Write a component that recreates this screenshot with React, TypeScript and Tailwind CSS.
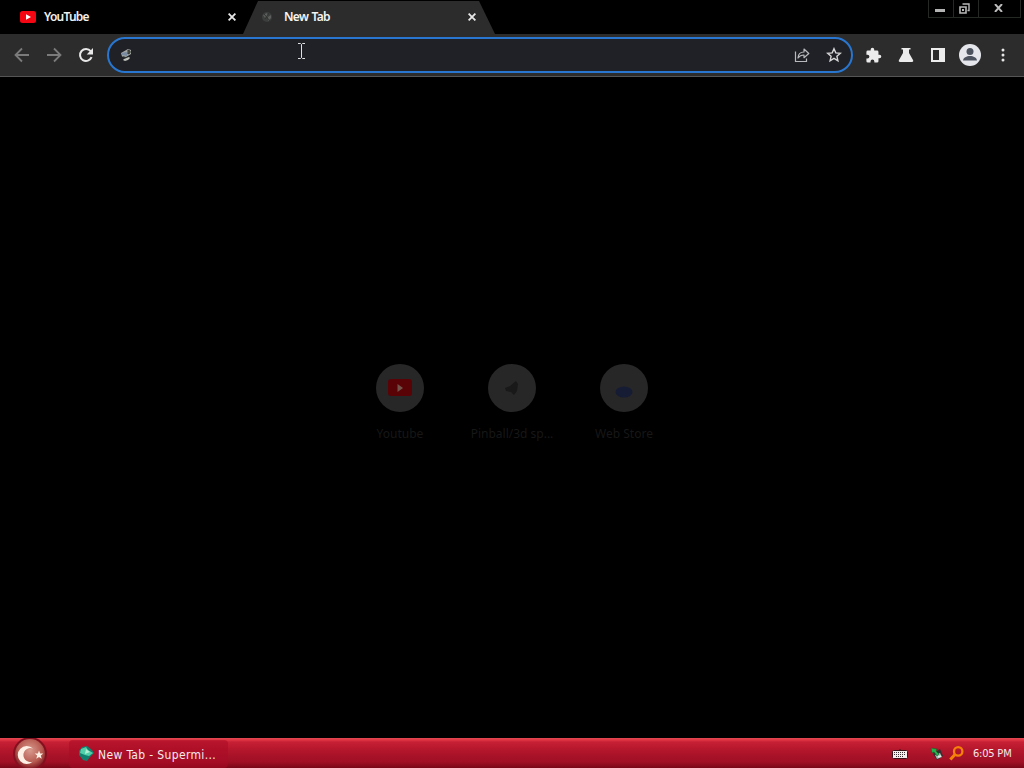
import React from "react";

function YouTubeLogo({ className }: { className: string }) {
  return (
    <svg className={className} viewBox="0 0 16 12">
      <rect width="16" height="12" rx="2.5" fill="#f40612" />
      <path d="M6 3.2 11 6 6 8.8z" fill="#fff" />
    </svg>
  );
}

function CloseIcon() {
  return (
    <svg className="h-2 w-2" viewBox="0 0 8 8" stroke="#e8e8e8" strokeWidth="1.8">
      <path d="M.6.6 7.4 7.4M7.4.6.6 7.4" />
    </svg>
  );
}

function TabStrip() {
  return (
    <header className="flex h-[34px] items-start bg-black">
      <div className="flex h-[34px] w-[243px] items-center pl-5 pr-[7px]">
        <YouTubeLogo className="h-3 w-4" />
        <span className="ml-2 text-[12px] font-semibold tracking-[-0.75px] text-[#f0f0f0]">YouTube</span>
        <span className="ml-auto"><CloseIcon /></span>
      </div>
      <div className="flex h-[34px] w-[252px] items-center bg-[#2c2c2c] pl-[18px] pr-[19px] [clip-path:polygon(15px_1px,236px_1px,100%_100%,0_100%)]">
        <svg className="h-3 w-3" viewBox="0 0 12 12">
          <circle cx="6" cy="6" r="5" fill="#3c3e3d" />
          <path d="m2 4 4-2 1 3-3 2zM7 6l3-2v3L7 10z" fill="#5c5f5d" />
          <path d="m4 8 4-6M3 3l6 7" stroke="#303330" strokeWidth="1" />
        </svg>
        <span className="ml-[11px] text-[12px] font-semibold tracking-[-0.7px] text-[#f4f4f4] [word-spacing:1px]">New Tab</span>
        <span className="ml-auto"><CloseIcon /></span>
      </div>
      <div className="ml-auto mr-[3px] flex h-[18px] w-[93px] border border-t-0 border-[#242924]">
        <div className="flex w-[25px] items-start justify-center border-r border-[#242924] pt-[9px]">
          <div className="ml-[-2px] h-[3px] w-[10px] bg-[#b4b4b4]" />
        </div>
        <div className="flex w-[25px] justify-center border-r border-[#242924] pt-[3px]">
          <svg className="mr-1 h-[11px] w-[11px]" viewBox="0 0 11 11" fill="none" stroke="#b8b8b8">
            <path d="M3.5 1H10v6.5H8.5" strokeWidth="1.4" />
            <path d="M1 4h6v6H1z" strokeWidth="1.6" />
            <path d="M3 6h2v2H3z" fill="#b8b8b8" stroke="none" />
          </svg>
        </div>
        <div className="flex flex-1 justify-center pr-[3px] pt-1">
          <svg className="h-2 w-[9px]" viewBox="0 0 9 8" stroke="#bdbdbd" strokeWidth="1.9"><path d="m1 0 7 8M8 0 1 8" /></svg>
        </div>
      </div>
    </header>
  );
}

function TextCursor() {
  return (
    <svg className="absolute left-[188px] top-[3px] h-[18px] w-[9px]" viewBox="0 0 9 18" fill="none" stroke="#e0e0e0">
      <path d="M1 1.5h2.5l1 1 1-1H8M4.5 2.5v13M1 16.5h2.5l1-1 1 1H8" />
    </svg>
  );
}

function Toolbar() {
  return (
    <div className="flex h-[43px] items-center border-b border-[#555] bg-[#2c2c2c] pl-[14px]">
      <svg className="h-4 w-4" viewBox="0 0 16 16" fill="none" stroke="#7b7b7b" strokeWidth="1.8"><path d="M15 8H2M8 1.5 1.5 8 8 14.5" /></svg>
      <svg className="ml-4 h-4 w-4" viewBox="0 0 16 16" fill="none" stroke="#7b7b7b" strokeWidth="1.8"><path d="M1 8h13M8 1.5 14.5 8 8 14.5" /></svg>
      <svg className="ml-4 h-4 w-4" viewBox="0 0 16 16" fill="none" stroke="#e8e8e8" strokeWidth="2"><path d="M13.6 10.2A6 6 0 1 1 12.7 4.2" /><path d="M15 1v6.5H8.7z" fill="#e8e8e8" stroke="none" /></svg>
      <div className="relative ml-[13px] flex h-9 w-[746px] items-center rounded-full border-2 border-[#2876cf] bg-[#202126] pl-[11px] pr-[9px]">
        <svg className="h-[14px] w-[13px]" viewBox="0 0 13 14">
          <path d="m1 5 7-4 3 1v4l-5 3-4-.5z" fill="#a3a8a5" />
          <path d="m2 5 4-1 2 1-1 3-5-1z" fill="#788ba1" />
          <path d="m8 2 2 1v2L8 6zM3 9l6 1" fill="#595c4e" stroke="#30352f" />
          <path d="m4 11 5-2 1 1-2 2-3 1-2-1z" fill="#c0c3bb" />
        </svg>
        <TextCursor />
        <svg className="ml-auto h-4 w-4" viewBox="0 0 16 16" fill="none" stroke="#b8b9bd" strokeWidth="1.2">
          <path d="M1.5 4.5v10h11v-3" />
          <path d="M4 11c.2-4.2 2.4-6 6-6V2l4.8 4.5L10 10.7V8C7 8 5.4 9 4 11z" strokeLinejoin="round" />
        </svg>
        <svg className="ml-4 h-4 w-4" viewBox="0 0 16 16" fill="none" stroke="#d7d7d7" strokeWidth="1.4"><path d="m8 1.7 1.8 4.2 4.6.4-3.5 3 1 4.5L8 11.4l-3.9 2.4 1-4.5-3.5-3 4.6-.4z" /></svg>
      </div>
      <svg className="ml-[12px] h-[17px] w-[17px]" viewBox="0 0 24 24" fill="#ececec"><path d="M20.5 11H19V7a2 2 0 0 0-2-2h-4V3.5a2.5 2.5 0 0 0-5 0V5H4a2 2 0 0 0-2 2v3.8h1.5a2.7 2.7 0 0 1 0 5.4H2V20a2 2 0 0 0 2 2h3.8v-1.5a2.7 2.7 0 0 1 5.4 0V22H17a2 2 0 0 0 2-2v-4h1.5a2.5 2.5 0 0 0 0-5z" /></svg>
      <svg className="ml-[16px] h-4 w-4" viewBox="0 0 16 16" fill="#ececec"><path d="M3.5 1h9v1.6H11V6l4 7c.6 1.2 0 2-1 2H2c-1 0-1.6-.8-1-2l4-7V2.6H3.5z" /></svg>
      <svg className="ml-[17px] h-[14px] w-[14px]" viewBox="0 0 14 14"><path d="M0 0h14v14H0zM2 2v10h6V2z" fill="#ececec" fillRule="evenodd" /></svg>
      <svg className="ml-[14px] h-[22px] w-[22px]" viewBox="0 0 22 22"><circle cx="11" cy="11" r="11" fill="#e4e6ec" /><circle cx="11" cy="7.5" r="3.5" fill="#4c535e" /><path d="M4 16.5c.5-6 13.5-6 14 0z" fill="#4c535e" /></svg>
      <svg className="ml-[20px] h-[14px] w-[4px]" viewBox="0 0 4 14" fill="#e8e8e8"><circle cx="2" cy="2" r="1.5" /><circle cx="2" cy="7" r="1.5" /><circle cx="2" cy="12" r="1.5" /></svg>
    </div>
  );
}

function Shortcut({ label, children }: { label: string; children: React.ReactNode }) {
  return (
    <div className="flex w-28 flex-col items-center">
      <div className="flex h-12 w-12 items-center justify-center rounded-full bg-[#272727]">{children}</div>
      <span className="mt-[14px] whitespace-nowrap text-[12px] leading-4 text-[#171717]">{label}</span>
    </div>
  );
}

function Taskbar() {
  return (
    <footer className="flex h-[30px] items-center bg-[linear-gradient(to_bottom,#e24a54_0px,#df3543_2px,#c72035_4px,#b6172c_11px,#a81229_18px,#a01025_24px,#780717_30px)] font-['DejaVu_Sans_Condensed','DejaVu_Sans',sans-serif] text-[#f5e9eb]">
      <svg className="ml-3 h-[30px] w-9" viewBox="0 0 36 30">
        <defs><radialGradient id="orb" cx="50%" cy="38%" r="62%"><stop offset="0" stopColor="#d89a8d" /><stop offset=".65" stopColor="#b75b51" /><stop offset="1" stopColor="#7d1720" /></radialGradient></defs>
        <circle cx="18" cy="16" r="17" fill="#84101f" /><circle cx="18" cy="16" r="15" fill="url(#orb)" />
        <path d="M21 10.5A9 9 0 1 0 21 23.5 7 7 0 1 1 21 10.5z" fill="#fff0e5" />
        <path d="m27 12.5 1.1 3 3.2.1-2.5 2 .9 3.1-2.7-1.800-2.700 1.800.9-3.100-2.500-2 3.200-.1z" fill="#fff0e5" />
      </svg>
      <div className="ml-[21px] mt-[2px] flex h-[28px] w-[159px] items-center rounded-sm bg-[#a90b26]/55 pl-[9px]">
        <svg className="h-4 w-4" viewBox="0 0 16 16">
          <path d="M1 5 4 1l5-1 5 4 2 3-4 4-3 4-4-1-4-5z" fill="#12806e" />
          <path d="m3 3 5-2 2 3 5 3-4 3-4-1-5-2z" fill="#50cfa9" />
          <path d="m8 3 4 3-5 2z" fill="#b0eed3" />
        </svg>
        <span className="ml-1 mt-[2px] whitespace-nowrap text-[12px] leading-4 tracking-[0.35px]">New Tab - Supermi...</span>
      </div>
      <svg className="ml-auto mt-[2px] h-[10px] w-4" viewBox="0 0 16 10">
        <path d="M8 2V0" stroke="#3d1118" />
        <rect x=".5" y="1.5" width="15" height="8" rx="1" fill="#f5eeee" stroke="#3d1118" />
        <path d="M2 3.5h12M2 5.5h12M4 7.5h8" stroke="#3b3034" strokeDasharray="1 1" />
      </svg>
      <svg className="ml-[22px] h-[15px] w-[15px]" viewBox="0 0 15 15">
        <path d="m3 8 7-5 3 7-6 4z" fill="#302e2e" /><path d="m5 9 5-2 2 4-5 2z" fill="#a7b9b2" />
        <path d="m1 2 6 1-1 2 3 3-2 2-3-4-2 1z" fill="#20b44a" stroke="#175225" strokeWidth=".5" />
        <path d="m8 11 3-1" stroke="#e5f2ef" strokeWidth="1.5" />
      </svg>
      <svg className="ml-1 h-[15px] w-[15px]" viewBox="0 0 15 15" fill="none" stroke="#f58108"><circle cx="9.2" cy="5.4" r="4.2" strokeWidth="2.3" /><path d="M6 8.5 1.3 13.5" strokeWidth="3" /></svg>
      <span className="ml-[9px] mr-3 mt-[2px] w-[39px] whitespace-nowrap text-[11px] leading-4 tracking-[-0.2px]">6:05 PM</span>
    </footer>
  );
}

export default function App() {
  return (
    <div className="flex h-[768px] w-[1024px] flex-col overflow-hidden bg-black font-['Noto_Sans',sans-serif]">
      <TabStrip />
      <Toolbar />
      <main className="flex min-h-0 flex-1 items-start justify-center bg-black pt-[287px]">
        <Shortcut label="Youtube"><svg className="h-[18px] w-6" viewBox="0 0 24 18"><rect width="24" height="17" rx="3" fill="#590307" /><path d="m9.500 5 5.500 4-5.500 4z" fill="#71554b" /></svg></Shortcut>
        <Shortcut label="Pinball/3d sp..."><svg className="h-5 w-5" viewBox="0 0 20 20"><path d="m3 10 5-2 6-5 2 3-1 7-3 4-3-3-5-1z" fill="#191919" /></svg></Shortcut>
        <Shortcut label="Web Store"><svg className="mt-2 h-3 w-5" viewBox="0 0 20 12"><ellipse cx="10" cy="6" rx="8.5" ry="5.5" fill="#171c35" /></svg></Shortcut>
      </main>
      <Taskbar />
    </div>
  );
}
